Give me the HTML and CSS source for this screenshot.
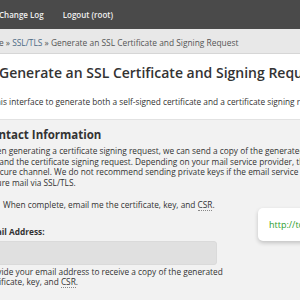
FILE: index.html
```html
<!DOCTYPE html>
<html lang="en">
<head>
  <meta charset="UTF-8">
  <title>Generate an SSL Certificate and Signing Request</title>
  <link rel="stylesheet" href="styles.css">
</head>
<body>

  <header class="topbar">
    <a href="#">Change Log</a>
    <a href="#">Logout (root)</a>
  </header>

  <div class="crumbs">
    <a href="#">Home</a> &raquo; <a href="#" class="crumb-link">SSL/TLS</a> &raquo; Generate an SSL Certificate and Signing Request
  </div>

  <div class="intro">
    <h1>Generate an SSL Certificate and Signing Request</h1>
    <p>Use this interface to generate both a self-signed certificate and a certificate signing request.</p>
  </div>

  <section class="contact">
    <h2>Contact Information</h2>
    <p>When generating a certificate signing request, we can send a copy of the generated<br>
      key and the certificate signing request. Depending on your mail service provider, this<br>
      insecure channel. We do not recommend sending private keys if the email service<br>
      secure mail via SSL/TLS.</p>

    <label class="check">
      <input type="checkbox">
      <span>When complete, email me the certificate, key, and <abbr title="Certificate Signing Request">CSR</abbr>.</span>
    </label>

    <div class="field">
      <label for="email">Email Address:</label>
      <input id="email" type="text">
      <p class="help">Provide your email address to receive a copy of the generated<br>
        certificate, key, and <abbr title="Certificate Signing Request">CSR</abbr>.</p>
    </div>

    <div class="url-pill">http://tools.example.com</div>
  </section>

</body>
</html>
```

FILE: styles.css
```css
body {
  margin: 0;
  font-family: 'Open Sans', 'DejaVu Sans', sans-serif;
  color: #333;
  background: #f2f2f2;
  overflow: hidden;
  width: 300px;
  height: 300px;
}
a {
  color: inherit;
  text-decoration: none;
}
.topbar {
  background: #4a4a4a;
  height: 29px;
  display: flex;
  align-items: center;
  gap: 19px;
  margin-left: -1px;
  font-size: 8px;
  font-weight: 600;
  color: #f0f0f0;
}
.crumbs {
  background: #e8e8e8;
  border-bottom: 1px solid #d6d6d6;
  height: 24px;
  line-height: 27px;
  margin-left: -20px;
  font-size: 8.4px;
  color: #555;
  white-space: nowrap;
}
.crumb-link {
  color: #4d6b85;
}
.intro {
  background: #fff;
  margin-left: -24px;
  padding: 4px 0 12px;
  white-space: nowrap;
  border-bottom: 1px solid #e2e2e2;
}
.intro h1 {
  margin: 0 0 0 23px;
  font-size: 14px;
  font-weight: 600;
  line-height: 30px;
  color: #333;
}
.intro p {
  margin: 8px 0 0;
  font-size: 8.3px;
}
.contact {
  position: relative;
  margin-left: -16px;
  padding-top: 4px;
  font-size: 8.3px;
  white-space: nowrap;
}
.contact h2 {
  margin: 0;
  font-size: 11.5px;
  font-weight: 700;
  line-height: 22px;
}
.contact p {
  margin: 0;
  line-height: 10.7px;
}
abbr {
  text-decoration: none;
  border-bottom: 1px dotted #888;
}
.check {
  display: flex;
  align-items: center;
  gap: 8px;
  margin-top: 9px;
  height: 14px;
}
.check input {
  margin: 0;
  width: 11px;
  height: 11px;
}
.field {
  margin-top: 13px;
}
.field label {
  display: block;
  font-weight: 700;
  line-height: 13px;
}
.field input {
  display: block;
  box-sizing: border-box;
  width: 233px;
  height: 24px;
  margin: 3px 0 2px;
  background: #e0e0e0;
  border: 1px solid #dadada;
  border-radius: 3px;
}
.contact .help {
  line-height: 10.5px;
}
.url-pill {
  position: absolute;
  left: 274px;
  top: 88px;
  padding: 10px 11px;
  background: #fff;
  border-radius: 5px;
  box-shadow: 0 2px 4px rgba(0, 0, 0, 0.2);
  color: #2e9e2e;
  font-size: 9px;
}
```
